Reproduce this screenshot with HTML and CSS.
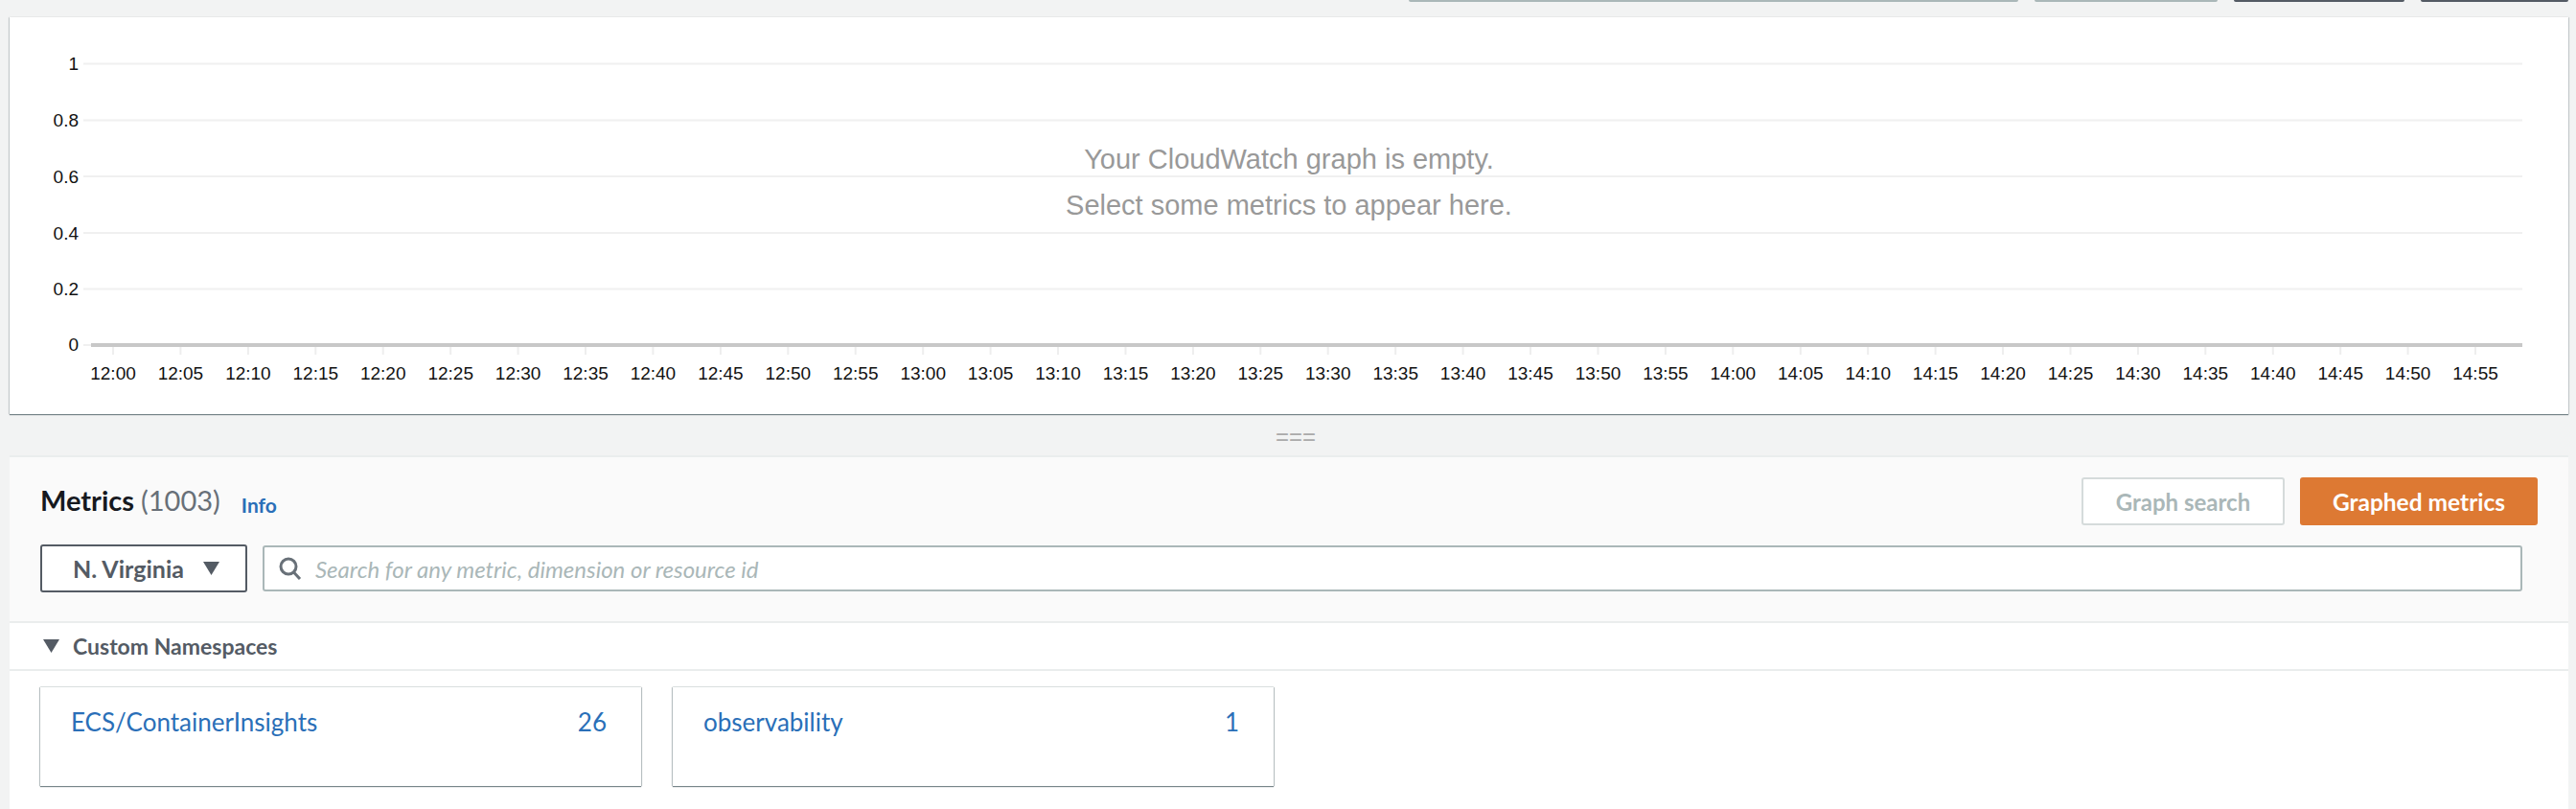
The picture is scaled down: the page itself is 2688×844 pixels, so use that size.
FILE: index.html
```html
<!doctype html>
<html lang=en>
  <head>
    <meta charset=utf-8 />
    <title>CloudWatch Metrics</title>
    <link rel="stylesheet" href="styles.css">
  </head>
  <body>
    <div class=top_strip>
      <span class="strip_button strip_wide"></span>
      <span class="strip_button strip_mid"></span>
      <span class="strip_button strip_dark strip_dark_a"></span>
      <span class="strip_button strip_dark strip_dark_b"></span>
    </div>

    <section class=graph_card>
      <svg class=graph_svg viewBox="10 18 2670 414" width=2670 height=414>
        <path class=grid d="M87 66.5H2632M87 125.5H2632M87 184H2632M87 243H2632M87 301.5H2632M87 360H95" />
        <path class=ticks d="M118 362v8M188.4 362v8M258.9 362v8M329.3 362v8M399.7 362v8M470.2 362v8M540.6 362v8M611 362v8M681.4 362v8M751.9 362v8M822.3 362v8M892.7 362v8M963.2 362v8M1033.6 362v8M1104 362v8M1174.5 362v8M1244.9 362v8M1315.3 362v8M1385.7 362v8M1456.2 362v8M1526.6 362v8M1597 362v8M1667.5 362v8M1737.9 362v8M1808.3 362v8M1878.8 362v8M1949.2 362v8M2019.6 362v8M2090 362v8M2160.5 362v8M2230.9 362v8M2301.3 362v8M2371.8 362v8M2442.2 362v8M2512.6 362v8M2583 362v8" />
        <path class=axis d="M95 360H2632" />
        <g class=y_labels>
          <text x=82 y=73>1</text>
          <text x=82 y=132>0.8</text>
          <text x=82 y=191>0.6</text>
          <text x=82 y=250>0.4</text>
          <text x=82 y=308>0.2</text>
          <text x=82 y=366>0</text>
        </g>
        <g class=x_labels>
          <text x=118 y=396>12:00</text>
          <text x=188.4 y=396>12:05</text>
          <text x=258.9 y=396>12:10</text>
          <text x=329.3 y=396>12:15</text>
          <text x=399.7 y=396>12:20</text>
          <text x=470.2 y=396>12:25</text>
          <text x=540.6 y=396>12:30</text>
          <text x=611 y=396>12:35</text>
          <text x=681.4 y=396>12:40</text>
          <text x=751.9 y=396>12:45</text>
          <text x=822.3 y=396>12:50</text>
          <text x=892.7 y=396>12:55</text>
          <text x=963.2 y=396>13:00</text>
          <text x=1033.6 y=396>13:05</text>
          <text x=1104 y=396>13:10</text>
          <text x=1174.5 y=396>13:15</text>
          <text x=1244.9 y=396>13:20</text>
          <text x=1315.3 y=396>13:25</text>
          <text x=1385.7 y=396>13:30</text>
          <text x=1456.2 y=396>13:35</text>
          <text x=1526.6 y=396>13:40</text>
          <text x=1597 y=396>13:45</text>
          <text x=1667.5 y=396>13:50</text>
          <text x=1737.9 y=396>13:55</text>
          <text x=1808.3 y=396>14:00</text>
          <text x=1878.8 y=396>14:05</text>
          <text x=1949.2 y=396>14:10</text>
          <text x=2019.6 y=396>14:15</text>
          <text x=2090 y=396>14:20</text>
          <text x=2160.5 y=396>14:25</text>
          <text x=2230.9 y=396>14:30</text>
          <text x=2301.3 y=396>14:35</text>
          <text x=2371.8 y=396>14:40</text>
          <text x=2442.2 y=396>14:45</text>
          <text x=2512.6 y=396>14:50</text>
          <text x=2583 y=396>14:55</text>
        </g>
      </svg>
      <div class=empty_note>
        <p>Your CloudWatch graph is empty.</p>
        <p>Select some metrics to appear here.</p>
      </div>
    </section>

    <div class=resizer>===</div>

    <section class=metrics_panel>
      <header class=panel_head>
        <div class=title_row>
          <h2 class=panel_title>Metrics <span class=panel_count>(1003)</span></h2>
          <a class=info_link>Info</a>
          <div class=title_actions>
            <button class="btn btn_disabled">Graph search</button>
            <button class="btn btn_primary">Graphed metrics</button>
          </div>
        </div>
        <div class=filter_row>
          <button class=region_select>N. Virginia
            <svg class=caret viewBox="0 0 17 14" width=17 height=14><path d="M0 0H17L8.5 14Z" /></svg>
          </button>
          <div class=search_box>
            <svg class=search_icon viewBox="0 0 24 24" width=24 height=24>
              <circle cx=10 cy=10 r=8 />
              <path d="M15.5 16L22 23" />
            </svg>
            <span class=search_placeholder>Search for any metric, dimension or resource id</span>
          </div>
        </div>
      </header>

      <div class=group_head>
        <svg class=caret viewBox="0 0 17 14" width=17 height=14><path d="M0 0H17L8.5 14Z" /></svg>
        <span>Custom Namespaces</span>
      </div>

      <div class=namespace_list>
        <a class=namespace_card><span>ECS/ContainerInsights</span><span>26</span></a>
        <a class=namespace_card><span>observability</span><span>1</span></a>
      </div>
    </section>
  </body>
</html>
```

FILE: styles.css
```css
html, body {
  height: 844px;
  overflow: hidden;
}

body {
  background: #f2f3f3;
  color: #16191f;
  font-family: Lato, 'Noto Sans', sans-serif;
  margin: 0;
  padding: 0 8px 0 10px;
}

/* bottoms of the buttons scrolled off the top */
.top_strip {
  display: flex;
  gap: 17px;
  height: 18px;
  justify-content: flex-end;
}

.strip_button {
  background: #aab7b8;
  border-radius: 0 0 2px 2px;
  height: 2px;
}
.strip_wide { width: 636px; }
.strip_mid { width: 191px; }
.strip_dark { background: #545b64; }
.strip_dark_a { width: 178px; }
.strip_dark_b { width: 154px; }

.graph_card {
  background: #fff;
  box-shadow: 0 1px 1px 0 rgba(0, 28, 36, .5), 1px 0 1px 0 rgba(0, 28, 36, .12), -1px 0 1px 0 rgba(0, 28, 36, .12);
  height: 414px;
  position: relative;
}

.graph_svg { display: block; }

.grid {
  fill: none;
  stroke: #f0f0f0;
  stroke-width: 2;
}

.ticks {
  fill: none;
  stroke: #eeeeee;
  stroke-width: 2;
}

.axis {
  fill: none;
  stroke: #c8c8c8;
  stroke-width: 4;
}

.y_labels text,
.x_labels text {
  fill: #111;
  font-family: 'Liberation Sans', Arial, sans-serif;
  font-size: 19px;
}
.y_labels text { text-anchor: end; }
.x_labels text { text-anchor: middle; }

/* sits over the empty chart */
.empty_note {
  color: #999;
  font-family: 'Liberation Sans', Arial, sans-serif;
  font-size: 29px;
  left: 0;
  pointer-events: none;
  position: absolute;
  right: 0;
  text-align: center;
  top: 124px;
}

.empty_note p {
  line-height: 48px;
  margin: 0;
}

.resizer {
  color: #aaa;
  font-family: 'Liberation Sans', Arial, sans-serif;
  font-size: 24px;
  height: 43px;
  line-height: 48px;
  padding-left: 14px;
  text-align: center;
}

.metrics_panel {
  background: #fff;
  height: 369px;
}

.panel_head {
  background: #fafafa;
  border-bottom: 2px solid #eaeded;
  border-top: 2px solid #eaeded;
  box-sizing: border-box;
  height: 175px;
  padding: 21px 32px 0 32px;
}

.title_row {
  align-items: flex-start;
  display: flex;
  height: 50px;
}

.panel_title {
  font-size: 29px;
  font-weight: 700;
  line-height: 48px;
  margin: 0;
}

.panel_count {
  color: #687078;
  font-weight: 400;
}

.info_link {
  color: #2a6fb8;
  font-size: 21px;
  font-weight: 700;
  line-height: 58px;
  margin-left: 22px;
}

.title_actions {
  display: flex;
  gap: 16px;
  margin-left: auto;
}

.btn {
  border-radius: 3px;
  box-sizing: border-box;
  font-family: inherit;
  font-weight: 700;
  height: 50px;
  padding: 0;
}

.btn_disabled {
  background: #fff;
  border: 2px solid #d5dbdb;
  color: #aab7b8;
  font-size: 24px;
  width: 212px;
}

.btn_primary {
  background: #dd7933;
  border: 0;
  color: #fff;
  font-size: 24.5px;
  width: 248px;
}

.filter_row {
  align-items: center;
  display: flex;
  gap: 16px;
  margin-top: 20px;
  padding-right: 16px;
}

.region_select {
  align-items: center;
  background: #fff;
  border: 2px solid #545b64;
  border-radius: 3px;
  box-sizing: border-box;
  color: #545b64;
  display: flex;
  font-family: inherit;
  font-size: 25px;
  font-weight: 700;
  gap: 20px;
  height: 50px;
  padding: 0 0 0 32px;
  width: 216px;
}

.caret { fill: #545b64; flex: none; }

.search_box {
  align-items: center;
  background: #fff;
  border: 2px solid #aab7b8;
  border-radius: 3px;
  box-sizing: border-box;
  display: flex;
  flex: 1;
  height: 48px;
  padding-left: 15px;
}

.search_icon {
  fill: none;
  flex: none;
  stroke: #687078;
  stroke-width: 3;
}

.search_placeholder {
  color: #aab7b8;
  font-size: 24px;
  font-style: italic;
  margin-left: 14px;
}

.group_head {
  align-items: center;
  background: #fff;
  border-bottom: 2px solid #eaeded;
  box-sizing: border-box;
  color: #545b64;
  display: flex;
  font-size: 23px;
  font-weight: 700;
  gap: 14px;
  height: 50px;
  padding-left: 35px;
}

.namespace_list {
  display: flex;
  gap: 33px;
  padding: 17px 0 0 32px;
}

.namespace_card {
  box-shadow: 0 1px 1px 0 rgba(0, 28, 36, .5), 1px 0 1px 0 rgba(0, 28, 36, .2), -1px 0 1px 0 rgba(0, 28, 36, .2), 0 -1px 1px 0 #eaeded;
  box-sizing: border-box;
  color: #2a6fb8;
  display: flex;
  font-size: 26px;
  height: 103px;
  justify-content: space-between;
  line-height: 30px;
  padding: 21px 36px 0 32px;
  width: 627px;
}
```
